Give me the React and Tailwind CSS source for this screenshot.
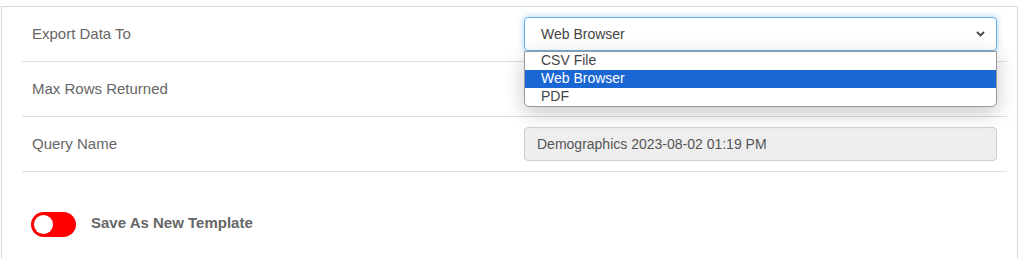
import React from 'react';

const Row = ({ label, children }) => (
  <div className="flex h-[55px] items-center border-b border-[#dedede] pl-[10px] pr-[10px]">
    <div className="flex-1 text-[15px] text-[#666]">{label}</div>
    <div className="w-[473px]">{children}</div>
  </div>
);

const Chevron = () => (
  <svg width="9" height="6" viewBox="0 0 9 6" className="text-[#444]">
    <path d="M1 1 L4.5 4.5 L8 1" fill="none" stroke="currentColor" strokeWidth="1.8" />
  </svg>
);

const ExportPanel = () => {
  const options = ['CSV File', 'Web Browser', 'PDF'];
  const selected = 'Web Browser';

  return (
    <div className="min-h-screen bg-white pt-[6px] pl-[1px] font-['Liberation_Sans',Arial,sans-serif]">
      <div className="w-[1017px] h-[253px] border-t border-l border-r border-[#d9d9d9] pl-[20px] pr-[10px]">
        <Row label="Export Data To">
          <div className="relative">
            <div className="flex h-[34px] items-center justify-between rounded-[4px] border border-[#66afe9] bg-white pl-[16px] pr-[11px] text-[14px] text-[#444] shadow-[0_0_6px_rgba(102,175,233,0.6)]">
              <span>{selected}</span>
              <Chevron />
            </div>
            <ul className="absolute left-0 right-0 top-[34px] z-10 overflow-hidden rounded-b-[5px] border border-[#9a9a9a] bg-white text-[14px] shadow-[0_6px_20px_rgba(0,0,0,0.22)]">
              {options.map((o) => (
                <li
                  key={o}
                  className={
                    o === selected
                      ? 'h-[18px] leading-[17px] bg-[#1a66d2] pl-[16px] text-white'
                      : 'h-[18px] leading-[17px] pl-[16px] text-[#444]'
                  }
                >
                  {o}
                </li>
              ))}
            </ul>
          </div>
        </Row>
        <Row label="Max Rows Returned">
          <div className="h-[34px]" />
        </Row>
        <Row label="Query Name">
          <div className="flex h-[34px] items-center rounded-[4px] border border-[#cfcfcf] bg-[#eeeeee] pl-[12px] text-[14px] text-[#555]">
            Demographics 2023-08-02 01:19 PM
          </div>
        </Row>
        <div className="mt-[40px] flex items-center pl-[9px]">
          <div className="flex h-[25px] w-[45px] items-center rounded-full bg-[#ff0000] pl-[3px]">
            <div className="h-[19px] w-[19px] rounded-full bg-white" />
          </div>
          <span className="ml-[15px] -mt-[2px] text-[15px] font-bold text-[#666]">Save As New Template</span>
        </div>
      </div>
    </div>
  );
};

export default function App() {
  return <ExportPanel />;
}
